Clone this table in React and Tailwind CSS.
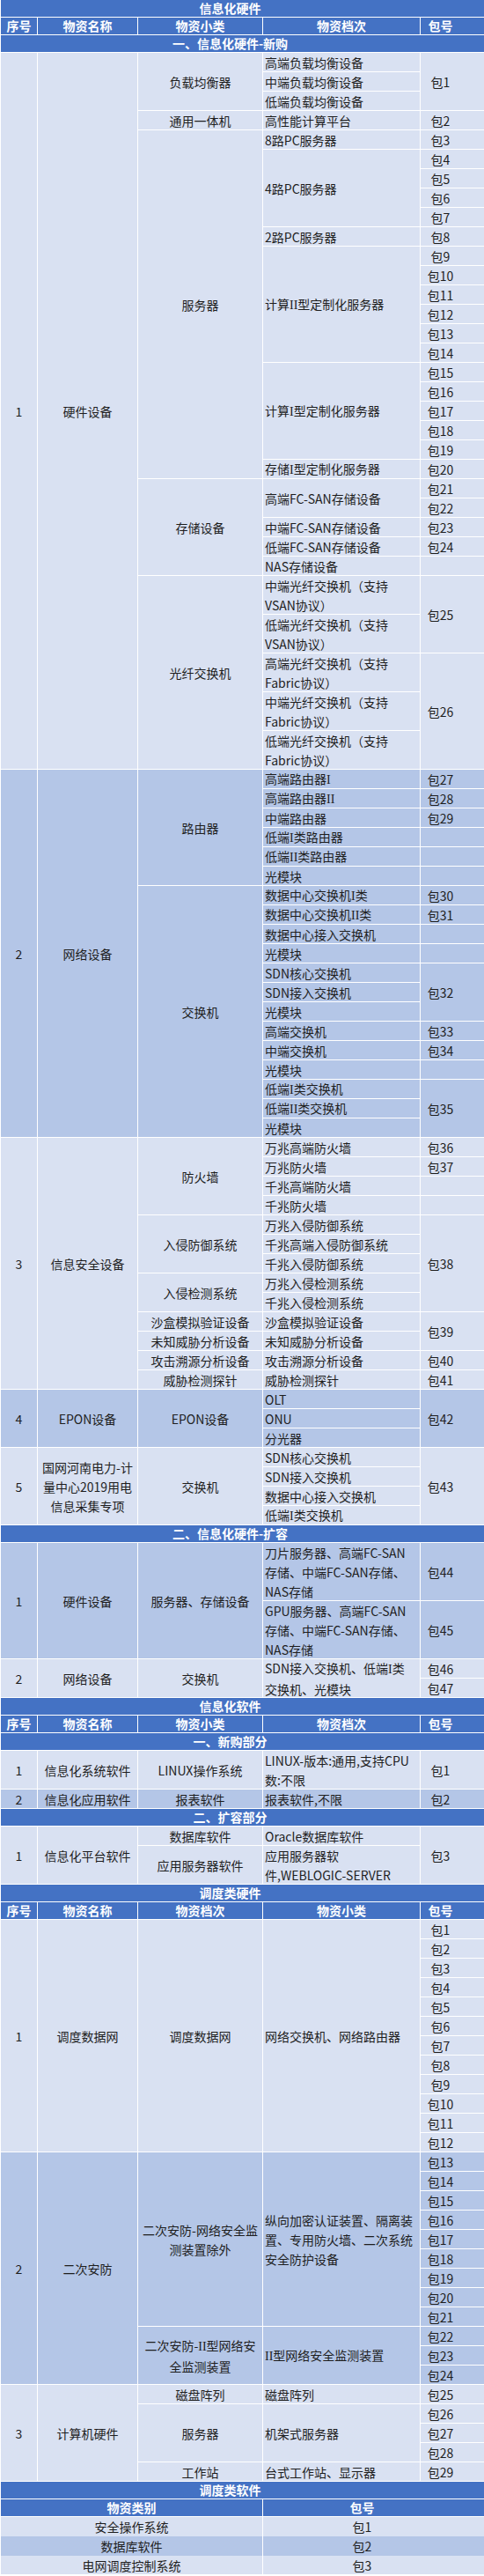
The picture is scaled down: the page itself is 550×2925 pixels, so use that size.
const L = "bg-[#d9e1f2]";
const D = "bg-[#b4c6e7]";

const RS = {
  1: "",
  2: "row-span-2",
  3: "row-span-3",
  4: "row-span-4",
  5: "row-span-5",
  6: "row-span-6",
  9: "row-span-9",
  10: "row-span-10",
  12: "row-span-12",
  13: "row-span-13",
  18: "row-span-18",
  19: "row-span-19",
  37: "row-span-37",
};

const KIND = {
  c: "justify-center text-center",
  d: "justify-start text-left pl-[2px]",
  p: "justify-center text-center pr-[27px]",
};

const COLS = "grid grid-cols-[41px_113px_141px_178px_1fr] gap-px";

// Ⅰ / Ⅱ are drawn in a serif face, as in the sheet
function roman(s, key) {
  return s.split(/([ⅠⅡ])/).map((part, i) =>
    part === "Ⅰ" || part === "Ⅱ" ? (
      <span key={key + "-" + i} className="font-['Liberation_Serif',serif]">
        {part === "Ⅰ" ? "I" : "II"}
      </span>
    ) : (
      part
    )
  );
}

function Text({ t }) {
  const lines = t.split("\n");
  return (
    <div className="whitespace-nowrap">
      {lines.map((line, i) => (
        <span key={i}>
          {i > 0 && <br />}
          {roman(line, i)}
        </span>
      ))}
    </div>
  );
}

function Group({ bg, cells }) {
  return (
    <div className={`${COLS} auto-rows-[21px]`}>
      {cells.map(([kind, t, r = 1], i) => (
        <div
          key={i}
          className={`${RS[r]} ${bg} ${KIND[kind]} flex items-center leading-[22px] text-[#1e1e1e]`}
        >
          <Text t={t} />
        </div>
      ))}
    </div>
  );
}

function Title({ children }) {
  return (
    <div className="h-[19px] bg-[#4472c4] text-white font-bold flex items-center justify-center pr-[28px] leading-[19px]">
      {children}
    </div>
  );
}

function Header({ labels }) {
  return (
    <div className={`${COLS} h-[19px]`}>
      {labels.map((l, i) => (
        <div
          key={i}
          className={`bg-[#4472c4] text-white font-bold flex items-center justify-center leading-[19px] ${i === 4 ? "pr-[27px]" : ""}`}
        >
          {l}
        </div>
      ))}
    </div>
  );
}

const pk = (from, to) => {
  const out = [];
  for (let n = from; n <= to; n++) out.push(["p", "包" + n]);
  return out;
};

const hw1 = [
  ["c", "1", 37],
  ["c", "硬件设备", 37],
  ["c", "负载均衡器", 3],
  ["d", "高端负载均衡设备"],
  ["p", "包1", 3],
  ["d", "中端负载均衡设备"],
  ["d", "低端负载均衡设备"],
  ["c", "通用一体机"],
  ["d", "高性能计算平台"],
  ["p", "包2"],
  ["c", "服务器", 18],
  ["d", "8路PC服务器"],
  ["p", "包3"],
  ["d", "4路PC服务器", 4],
  ...pk(4, 7),
  ["d", "2路PC服务器"],
  ["p", "包8"],
  ["d", "计算Ⅱ型定制化服务器", 6],
  ...pk(9, 14),
  ["d", "计算Ⅰ型定制化服务器", 5],
  ...pk(15, 19),
  ["d", "存储Ⅰ型定制化服务器"],
  ["p", "包20"],
  ["c", "存储设备", 5],
  ["d", "高端FC-SAN存储设备", 2],
  ...pk(21, 22),
  ["d", "中端FC-SAN存储设备"],
  ["p", "包23"],
  ["d", "低端FC-SAN存储设备"],
  ["p", "包24"],
  ["d", "NAS存储设备"],
  ["p", ""],
  ["c", "光纤交换机", 10],
  ["d", "中端光纤交换机（支持\nVSAN协议）", 2],
  ["p", "包25", 4],
  ["d", "低端光纤交换机（支持\nVSAN协议）", 2],
  ["d", "高端光纤交换机（支持\nFabric协议）", 2],
  ["p", "包26", 6],
  ["d", "中端光纤交换机（支持\nFabric协议）", 2],
  ["d", "低端光纤交换机（支持\nFabric协议）", 2],
];

const hw2 = [
  ["c", "2", 19],
  ["c", "网络设备", 19],
  ["c", "路由器", 6],
  ["d", "高端路由器Ⅰ"],
  ["p", "包27"],
  ["d", "高端路由器Ⅱ"],
  ["p", "包28"],
  ["d", "中端路由器"],
  ["p", "包29"],
  ["d", "低端Ⅰ类路由器"],
  ["p", ""],
  ["d", "低端Ⅱ类路由器"],
  ["p", ""],
  ["d", "光模块"],
  ["p", ""],
  ["c", "交换机", 13],
  ["d", "数据中心交换机Ⅰ类"],
  ["p", "包30"],
  ["d", "数据中心交换机Ⅱ类"],
  ["p", "包31"],
  ["d", "数据中心接入交换机"],
  ["p", ""],
  ["d", "光模块"],
  ["p", ""],
  ["d", "SDN核心交换机"],
  ["p", "包32", 3],
  ["d", "SDN接入交换机"],
  ["d", "光模块"],
  ["d", "高端交换机"],
  ["p", "包33"],
  ["d", "中端交换机"],
  ["p", "包34"],
  ["d", "光模块"],
  ["p", ""],
  ["d", "低端Ⅰ类交换机"],
  ["p", "包35", 3],
  ["d", "低端Ⅱ类交换机"],
  ["d", "光模块"],
];

const hw3 = [
  ["c", "3", 13],
  ["c", "信息安全设备", 13],
  ["c", "防火墙", 4],
  ["d", "万兆高端防火墙"],
  ["p", "包36"],
  ["d", "万兆防火墙"],
  ["p", "包37"],
  ["d", "千兆高端防火墙"],
  ["p", ""],
  ["d", "千兆防火墙"],
  ["p", ""],
  ["c", "入侵防御系统", 3],
  ["d", "万兆入侵防御系统"],
  ["p", "包38", 5],
  ["d", "千兆高端入侵防御系统"],
  ["d", "千兆入侵防御系统"],
  ["c", "入侵检测系统", 2],
  ["d", "万兆入侵检测系统"],
  ["d", "千兆入侵检测系统"],
  ["c", "沙盒模拟验证设备"],
  ["d", "沙盒模拟验证设备"],
  ["p", "包39", 2],
  ["c", "未知威胁分析设备"],
  ["d", "未知威胁分析设备"],
  ["c", "攻击溯源分析设备"],
  ["d", "攻击溯源分析设备"],
  ["p", "包40"],
  ["c", "威胁检测探针"],
  ["d", "威胁检测探针"],
  ["p", "包41"],
];

const hw4 = [
  ["c", "4", 3],
  ["c", "EPON设备", 3],
  ["c", "EPON设备", 3],
  ["d", "OLT"],
  ["p", "包42", 3],
  ["d", "ONU"],
  ["d", "分光器"],
];

const hw5 = [
  ["c", "5", 4],
  ["c", "国网河南电力-计\n量中心2019用电\n信息采集专项", 4],
  ["c", "交换机", 4],
  ["d", "SDN核心交换机"],
  ["p", "包43", 4],
  ["d", "SDN接入交换机"],
  ["d", "数据中心接入交换机"],
  ["d", "低端Ⅰ类交换机"],
];

const ext1 = [
  ["c", "1", 6],
  ["c", "硬件设备", 6],
  ["c", "服务器、存储设备", 6],
  ["d", "刀片服务器、高端FC-SAN\n存储、中端FC-SAN存储、\nNAS存储", 3],
  ["p", "包44", 3],
  ["d", "GPU服务器、高端FC-SAN\n存储、中端FC-SAN存储、\nNAS存储", 3],
  ["p", "包45", 3],
];

const ext2 = [
  ["c", "2", 2],
  ["c", "网络设备", 2],
  ["c", "交换机", 2],
  ["d", "SDN接入交换机、低端Ⅰ类\n交换机、光模块", 2],
  ["p", "包46"],
  ["p", "包47"],
];

const sw1 = [
  ["c", "1", 2],
  ["c", "信息化系统软件", 2],
  ["c", "LINUX操作系统", 2],
  ["d", "LINUX-版本:通用,支持CPU\n数:不限", 2],
  ["p", "包1", 2],
];

const sw2 = [
  ["c", "2"],
  ["c", "信息化应用软件"],
  ["c", "报表软件"],
  ["d", "报表软件,不限"],
  ["p", "包2"],
];

const sw3 = [
  ["c", "1", 3],
  ["c", "信息化平台软件", 3],
  ["c", "数据库软件"],
  ["d", "Oracle数据库软件"],
  ["p", "包3", 3],
  ["c", "应用服务器软件", 2],
  ["d", "应用服务器软\n件,WEBLOGIC-SERVER", 2],
];

const dd1 = [
  ["c", "1", 12],
  ["c", "调度数据网", 12],
  ["c", "调度数据网", 12],
  ["d", "网络交换机、网络路由器", 12],
  ...pk(1, 12),
];

const dd2 = [
  ["c", "2", 12],
  ["c", "二次安防", 12],
  ["c", "二次安防-网络安全监\n测装置除外", 9],
  ["d", "纵向加密认证装置、隔离装\n置、专用防火墙、二次系统\n安全防护设备", 9],
  ...pk(13, 21),
  ["c", "二次安防-Ⅱ型网络安\n全监测装置", 3],
  ["d", "Ⅱ型网络安全监测装置", 3],
  ...pk(22, 24),
];

const dd3 = [
  ["c", "3", 5],
  ["c", "计算机硬件", 5],
  ["c", "磁盘阵列"],
  ["d", "磁盘阵列"],
  ["p", "包25"],
  ["c", "服务器", 3],
  ["d", "机架式服务器", 3],
  ...pk(26, 28),
  ["c", "工作站"],
  ["d", "台式工作站、显示器"],
  ["p", "包29"],
];

const softRows = [
  ["安全操作系统", "包1", L],
  ["数据库软件", "包2", D],
  ["电网调度控制系统", "包3", L],
];

export default function App() {
  const head = ["序号", "物资名称", "物资小类", "物资档次", "包号"];
  return (
    <div className="w-[550px] bg-white pl-px flex flex-col gap-px font-['Noto_Sans_CJK_SC',sans-serif] text-[14px]">
      <Title>信息化硬件</Title>
      <Header labels={head} />
      <Title>一、信息化硬件-新购</Title>
      <Group bg={L} cells={hw1} />
      <Group bg={D} cells={hw2} />
      <Group bg={L} cells={hw3} />
      <Group bg={D} cells={hw4} />
      <Group bg={L} cells={hw5} />
      <Title>二、信息化硬件-扩容</Title>
      <Group bg={D} cells={ext1} />
      <Group bg={L} cells={ext2} />

      <Title>信息化软件</Title>
      <Header labels={head} />
      <Title>一、新购部分</Title>
      <Group bg={L} cells={sw1} />
      <Group bg={D} cells={sw2} />
      <Title>二、扩容部分</Title>
      <Group bg={L} cells={sw3} />

      <Title>调度类硬件</Title>
      <Header labels={["序号", "物资名称", "物资档次", "物资小类", "包号"]} />
      <Group bg={L} cells={dd1} />
      <Group bg={D} cells={dd2} />
      <Group bg={L} cells={dd3} />

      <Title>调度类软件</Title>
      <div className={`${COLS} h-[19px]`}>
        <div className="col-span-3 bg-[#4472c4] text-white font-bold flex items-center justify-center leading-[19px]">
          物资类别
        </div>
        <div className="col-span-2 bg-[#4472c4] text-white font-bold flex items-center justify-center pr-[26px] leading-[19px]">
          包号
        </div>
      </div>
      {softRows.map(([name, p, bg]) => (
        <div key={p} className={`${COLS} h-[21px]`}>
          <div className={`col-span-3 ${bg} flex items-center justify-center leading-[22px] text-[#1e1e1e]`}>
            {name}
          </div>
          <div className={`col-span-2 ${bg} flex items-center justify-center pr-[26px] leading-[22px] text-[#1e1e1e]`}>
            {p}
          </div>
        </div>
      ))}
    </div>
  );
}
